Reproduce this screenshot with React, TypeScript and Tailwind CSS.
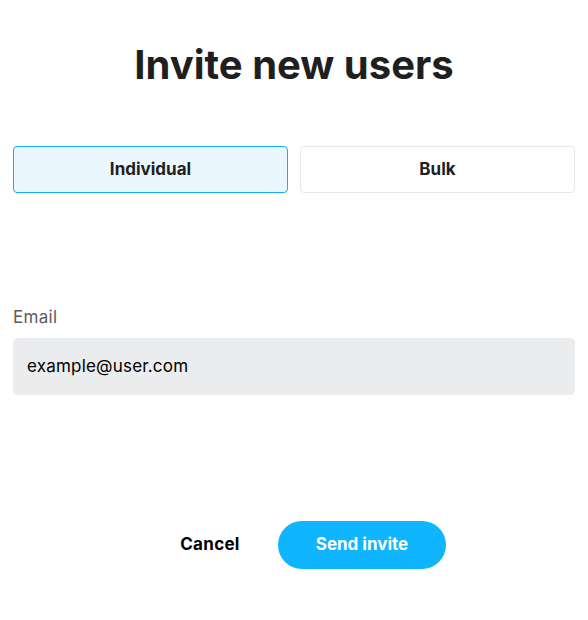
import { useState } from "react";

export default function App() {
	const [mode, setMode] = useState<"individual" | "bulk">("individual");

	return (
		<div className="min-h-screen bg-white px-[13px] pt-[39px] font-['Inter',sans-serif] text-[#1f1f1f]">
			<h1 className="text-center text-[40px] font-bold leading-[52px]">Invite new users</h1>

			<div className="mt-[55px] grid grid-cols-2 gap-3">
				<button
					onClick={() => setMode("individual")}
					className={
						mode === "individual"
							? "h-[47px] rounded-[4px] border border-[#14b0f5] bg-[#ebf7fe] text-[17px] font-bold"
							: "h-[47px] rounded-[4px] border border-[#e8e8e8] bg-white text-[17px] font-bold"
					}
				>
					Individual
				</button>
				<button
					onClick={() => setMode("bulk")}
					className={
						mode === "bulk"
							? "h-[47px] rounded-[4px] border border-[#14b0f5] bg-[#ebf7fe] text-[17px] font-bold"
							: "h-[47px] rounded-[4px] border border-[#e8e8e8] bg-white text-[17px] font-bold"
					}
				>
					Bulk
				</button>
			</div>

			<label className="mt-[112px] block text-[17px] leading-[24px] tracking-[0.3px] text-[#5b5b5b]">Email</label>
			<div className="mt-[9px] flex h-[57px] items-center rounded-[5px] bg-[#ebecee] px-[14px] text-[17px] tracking-[0.2px] text-black">
				example@user.com
			</div>

			<div className="mt-[126px] flex items-center justify-center">
				<button className="w-[136px] text-[17px] font-bold tracking-[0.3px] text-black">Cancel</button>
				<button className="h-[48px] w-[168px] rounded-full bg-[#0fb5fe] text-[17px] font-bold text-white">
					Send invite
				</button>
			</div>
		</div>
	);
}
